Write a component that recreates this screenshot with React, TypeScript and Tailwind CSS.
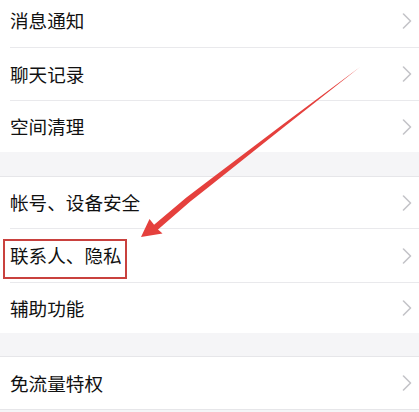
import React from "react";

const Chevron = () => (
  <svg width="10" height="16" viewBox="0 0 10 16" className="shrink-0">
    <polyline points="1.5,1 8.5,8 1.5,15" fill="none" stroke="#c4c4c8" strokeWidth="1.6" strokeLinecap="round" strokeLinejoin="round" />
  </svg>
);

const Row = ({ label, h }: { label: string; h: string }) => (
  <div className={`flex items-center justify-between pl-[10px] pr-[7px] bg-white ${h}`}>
    <span className="text-[18.6px] leading-none text-[#111111]" style={{ fontFamily: '"Noto Sans CJK SC", "Noto Sans", sans-serif' }}>
      {label}
    </span>
    <Chevron />
  </div>
);

const Sep = () => (
  <div className="bg-white">
    <div className="ml-[10px] h-px bg-[#e9e9ec]" />
  </div>
);

const FullLine = () => <div className="h-px bg-[#e6e6e9]" />;

export default function App() {
  return (
    <div className="relative w-[419px] h-[412px] overflow-hidden bg-[#f5f5f7]">
      <div className="-mt-[6px]">
        <Row label="消息通知" h="h-[53px]" />
        <Sep />
        <Row label="聊天记录" h="h-[52px]" />
        <Sep />
        <Row label="空间清理" h="h-[51px]" />
        <div className="h-[24px]" />
        <FullLine />
        <Row label="帐号、设备安全" h="h-[51px]" />
        <Sep />
        <Row label="联系人、隐私" h="h-[53px]" />
        <Sep />
        <Row label="辅助功能" h="h-[50px]" />
        <div className="h-[23px]" />
        <FullLine />
        <Row label="免流量特权" h="h-[52px]" />
        <FullLine />
      </div>

      <div className="absolute left-[3px] top-[239px] w-[124px] h-[40px] border-2 border-[#c9413e]" />

      <svg className="absolute left-0 top-0" width="419" height="412" viewBox="0 0 419 412">
        <polygon
          fill="#e5403d"
          points="141,237 162.5,233.5 158,229.5 190,201.8 210.6,185.5 285.9,125.6 360,67 284.1,123.4 207.4,181.5 186.4,197.6 154.1,224.7 149.5,219"
        />
      </svg>
    </div>
  );
}
